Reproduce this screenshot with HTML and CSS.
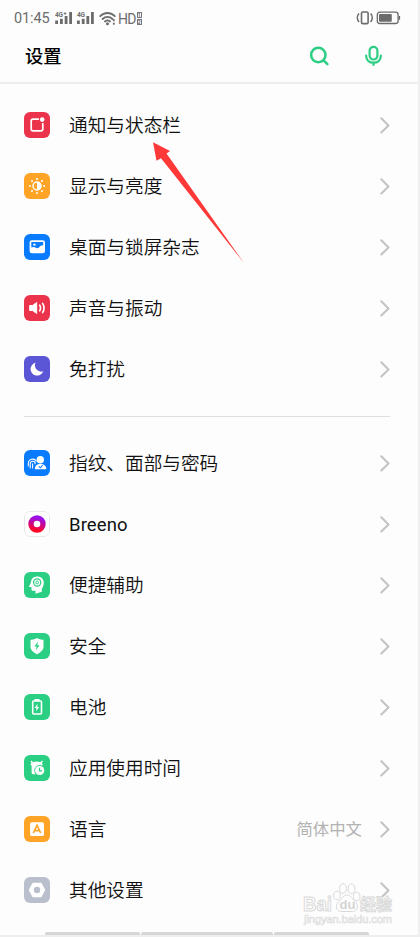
FILE: index.html
```html
<!DOCTYPE html>
<html lang="zh-CN">
<head>
<meta charset="utf-8">
<title>设置</title>
<link rel="stylesheet" href="styles.css">
</head>
<body>
<svg width="0" height="0" class="defs">
  <defs>
    <linearGradient id="ring" x1="0.6" y1="0" x2="0.4" y2="1"><stop offset="0" stop-color="#9a10e8"/><stop offset="0.5" stop-color="#c8088f"/><stop offset="1" stop-color="#ff0828"/></linearGradient>
    <symbol id="chev" viewBox="0 0 12 18"><path d="M2.300 2.300l7.200 7.100-7.200 7.100" fill="none" stroke="#c4c4c4" stroke-width="2.100" stroke-linecap="round" stroke-linejoin="round"/></symbol>
  </defs>
</svg>
<div class="screen">
  <div class="status">
    <span class="time">01:45</span>
    <svg class="signals" width="40" height="16" viewBox="0 0 40 16" fill="#6c6c6c">
      <text x="0" y="6" class="net">4G</text><text x="22" y="6" class="net">4G</text>
      <path d="M8.800 2.500h2.600M10.100 1.200v2.600" stroke="#6c6c6c" stroke-width=".9"/>
      <rect x="0.200" y="9.500" width="2.800" height="3.500"/><rect x="5" y="7.800" width="2.800" height="5.200"/><rect x="9.700" y="5" width="2.800" height="8"/><rect x="14.200" y="1" width="2.800" height="12"/>
      <rect x="22" y="9.500" width="2.800" height="3.500"/><rect x="26.800" y="7.800" width="2.800" height="5.200"/><rect x="31.400" y="5" width="2.800" height="8"/><rect x="36" y="1" width="2.800" height="12"/>
    </svg>
    <svg class="wifi" width="18" height="15" viewBox="0 0 18 15" fill="none" stroke="#6c6c6c" stroke-width="1.800" stroke-linecap="round">
      <path d="M1.200 5.200c4-4.300 10.600-4.300 14.600 0M3.600 8c2.800-2.800 7-2.800 9.800 0M6 10.500c1.500-1.400 3.500-1.400 5 0"/><circle cx="8.500" cy="12.700" r=".6" fill="#6c6c6c"/>
      <path d="M14.800 9v.4M14.800 12.500v.4" stroke-width="1.900"/>
    </svg>
    <span class="hd">HD</span>
    <span class="sims"><i>1</i><i>2</i></span>
    <svg class="power" width="46" height="16" viewBox="0 0 46 16" fill="none" stroke="#6c6c6c" stroke-width="1.300">
      <rect x="5.500" y="2" width="6.600" height="11.600" rx="1.200" stroke-width="1.600"/>
      <path d="M3 3.500c-2.200 2.500-2.200 6 0 8.500M14.600 3.500c2.200 2.500 2.200 6 0 8.500" stroke-width="1.600"/>
      <rect x="21.300" y="2.200" width="20.800" height="11.300" rx="2.500"/>
      <rect x="23" y="4" width="12.800" height="7.800" rx="1" fill="#6c6c6c" stroke="none"/>
      <path d="M43.300 6v3.700" stroke-width="1.600"/>
    </svg>
  </div>
  <header class="header">
    <h1>设置</h1>
    <svg class="search" width="22" height="22" viewBox="0 0 22 22" fill="none" stroke="#2cce84" stroke-width="2.500" stroke-linecap="round"><circle cx="10.300" cy="10" r="7.200"/><path d="M15.600 15.300l3.800 3.800"/></svg>
    <svg class="mic" width="20" height="22" viewBox="0 0 20 22" fill="none" stroke="#2cce84" stroke-width="2.200" stroke-linecap="round"><rect x="6.600" y="1.800" width="7.800" height="12.700" rx="3.900"/><path d="M3.100 10.500c0 4.600 3.200 7.200 7.400 7.200s7.400-2.600 7.400-7.200M10.500 18v2"/></svg>
  </header>

  <main>
    <section class="group">
      <div class="row"><svg class="icon red" viewBox="0 0 26 26"><path d="M15 7.200H9a1.800 1.800 0 0 0-1.800 1.800v8A1.800 1.800 0 0 0 9 18.800h8a1.800 1.800 0 0 0 1.800-1.800v-6" fill="none" stroke="#fff" stroke-width="1.700"/><circle cx="18.200" cy="7.600" r="2.300" fill="#fff"/></svg><span class="label">通知与状态栏</span><svg class="chev"><use href="#chev"/></svg></div>
      <div class="row"><svg class="icon orange" viewBox="0 0 26 26"><circle cx="13" cy="13" r="4" fill="none" stroke="#fff" stroke-width="1.500"/><path d="M13 9a4 4 0 0 1 0 8z" fill="#fff"/><g fill="#fff"><circle cx="13" cy="5.900" r="1"/><circle cx="13" cy="20.100" r="1"/><circle cx="5.900" cy="13" r="1"/><circle cx="20.100" cy="13" r="1"/><circle cx="8" cy="8" r="1"/><circle cx="18" cy="8" r="1"/><circle cx="8" cy="18" r="1"/><circle cx="18" cy="18" r="1"/></g></svg><span class="label">显示与亮度</span><svg class="chev"><use href="#chev"/></svg></div>
      <div class="row"><svg class="icon blue" viewBox="0 0 26 26"><rect x="5.600" y="6.300" width="15.400" height="13" rx="2.300" fill="#fff"/><path d="M7.300 8h11.900v3.200c-3 .2-3.200 1.300-4.200 2.300s-2.400.8-3.600 0-2.600-.8-4.100 0z" fill="#087bff"/><circle cx="10.400" cy="10.600" r="1.200" fill="#fff"/></svg><span class="label">桌面与锁屏杂志</span><svg class="chev"><use href="#chev"/></svg></div>
      <div class="row"><svg class="icon red" viewBox="0 0 26 26"><path d="M5.700 10.500h2.800l4.200-3v11l-4.200-3H5.700z" fill="#fff" stroke="#fff" stroke-linejoin="round"/><path d="M15.700 10.200q1.700 2.800 0 5.600M18.600 8.300q2.800 4.700 0 9.400" fill="none" stroke="#fff" stroke-width="1.600" stroke-linecap="round"/></svg><span class="label">声音与振动</span><svg class="chev"><use href="#chev"/></svg></div>
      <div class="row"><svg class="icon violet" viewBox="0 0 26 26"><path d="M11.500 6.800a6.500 6.500 0 1 0 7.700 8.500A6.300 6.300 0 0 1 11.500 6.800z" fill="#fff"/></svg><span class="label">免打扰</span><svg class="chev"><use href="#chev"/></svg></div>
    </section>
    <hr class="divider">
    <section class="group">
      <div class="row"><svg class="icon blue" viewBox="0 0 26 26"><circle cx="16.300" cy="9.700" r="3.700" fill="#fff"/><path d="M10.800 19.300c0-3.800 2.200-5.400 5.500-5.400 4 0 6 2 6 5.400z" fill="#fff"/><path d="M14.800 16.400l1.500 1.400 2.400-2.600" fill="none" stroke="#087bff" stroke-width="1.100"/><path d="M4.300 16v-2.500a4.300 4.300 0 0 1 8-2.200M6.200 18v-4.200a2.500 2.500 0 0 1 5 0M8.600 13.800V18" fill="none" stroke="#fff" stroke-width="1.050" stroke-linecap="round"/></svg><span class="label">指纹、面部与密码</span><svg class="chev"><use href="#chev"/></svg></div>
      <div class="row"><svg class="icon white" viewBox="0 0 26 26"><rect x=".5" y=".5" width="25" height="25" rx="5.500" fill="#fff" stroke="#e9e9e9"/><circle cx="13" cy="13" r="6" fill="none" stroke="url(#ring)" stroke-width="5.400"/></svg><span class="label latin">Breeno</span><svg class="chev"><use href="#chev"/></svg></div>
      <div class="row"><svg class="icon green" viewBox="0 0 26 26"><path d="M13 4.600c4.300 0 6.800 2.600 6.800 6.200 0 3.200-1.300 4.500-2 6v2.900l-6.300 2v-2.900H9c-1.200 0-1.500-.6-1.500-1.600v-1.900l-2.700-.5 2-3.800c.3-3.600 2.300-6.400 6.200-6.400z" fill="#fff"/><circle cx="13.200" cy="10.500" r="3.600" fill="none" stroke="#2bcf83" stroke-width="1.200"/><circle cx="13.200" cy="10.500" r="1.400" fill="none" stroke="#2bcf83"/></svg><span class="label">便捷辅助</span><svg class="chev"><use href="#chev"/></svg></div>
      <div class="row"><svg class="icon green" viewBox="0 0 26 26"><path d="M13 4.900c2 1.200 4 1.700 6.500 1.800v6.800c0 3.500-2.700 5.800-6.500 7.700-3.800-1.900-6.500-4.200-6.500-7.700V6.700c2.500-.1 4.500-.6 6.500-1.800z" fill="#fff"/><path d="M13.900 8.600l-3.500 5h2.200l-.6 3.700 3.500-5h-2.200z" fill="#2bcf83"/></svg><span class="label">安全</span><svg class="chev"><use href="#chev"/></svg></div>
      <div class="row"><svg class="icon green" viewBox="0 0 26 26"><rect x="8.700" y="7" width="8.800" height="13" rx="1" fill="none" stroke="#fff" stroke-width="1.600"/><path d="M10.500 5h5v2h-5z" fill="#fff"/><path d="M13.600 9.800l-3.100 4.200h1.900l-.4 3.200 3.200-4.200h-1.900z" fill="#fff"/></svg><span class="label">电池</span><svg class="chev"><use href="#chev"/></svg></div>
      <div class="row"><svg class="icon green" viewBox="0 0 26 26"><path d="M7.300 5.400l1.700 1.800q3.700-1.300 7.400 0l1.700-1.800.8.800-1 1.800q.8 1 .8 2.200L13 13l-1.200 6.200H9q-1.400 0-1.400-1.400v-7.100L6.400 9.400l1-1.500-.9-1.700z" fill="#fff"/><circle cx="15.700" cy="15.500" r="5.400" fill="#2bcf83"/><circle cx="15.700" cy="15.500" r="4.600" fill="#fff"/><path d="M15.500 12.700v3.100h2.500" fill="none" stroke="#2bcf83" stroke-width="1.200"/></svg><span class="label">应用使用时间</span><svg class="chev"><use href="#chev"/></svg></div>
      <div class="row"><svg class="icon orange" viewBox="0 0 26 26"><rect x="6.100" y="6.300" width="13.900" height="13.700" rx="1.600" fill="#fff"/><path d="M9.400 17L13 9.200l3.700 7.800M10.900 14.700h4.300" fill="none" stroke="#ffa427" stroke-width="1.700"/></svg><span class="label">语言</span><span class="value">简体中文</span><svg class="chev"><use href="#chev"/></svg></div>
      <div class="row"><svg class="icon gray" viewBox="0 0 26 26"><path d="M9 6.500h8l3.500 6.500-3.500 6.500H9L5.500 13z" fill="#fff" stroke="#fff" stroke-width="1.500" stroke-linejoin="round"/><circle cx="13" cy="13" r="3.200" fill="#babfcd"/></svg><span class="label">其他设置</span><svg class="chev"><use href="#chev"/></svg></div>
    </section>
  </main>

  <svg class="arrow" width="92" height="122" viewBox="0 0 92 122"><path d="M1 .3l17 8.700-3.500 2.500L92 121 9 16.200l-4.500 2.500z" fill="#ff3838"/></svg>

  <svg class="watermark" width="100" height="46" viewBox="0 0 100 46">
    <g fill="#fdfdfd" stroke="#d9d9d9" stroke-width="1">
      <ellipse cx="36" cy="13.500" rx="3.300" ry="4.300"/><ellipse cx="42" cy="6.500" rx="3.400" ry="5"/><ellipse cx="50.500" cy="6.800" rx="3.400" ry="5"/><ellipse cx="55.700" cy="14.500" rx="3.300" ry="4.300"/>
      <path d="M46 13c4 0 5 4 8 6.500 4.500 4 2.500 10-2.500 10H40.500c-5.500 0-7-6-2.500-10 3-2.500 4-6.500 8-6.500z"/>
      <text x="2" y="28.500" class="wm" textLength="29" lengthAdjust="spacingAndGlyphs">Bai</text><text x="59" y="28" class="wm zh">经验</text>
    </g>
    <text x="38.500" y="27" class="wm du">du</text>
    <text x="3" y="41" class="wm-url" textLength="88">jingyan.baidu.com</text>
  </svg>
  <div class="scroll"><i class="a"></i><i class="b"></i><i class="c"></i></div>
</div>
</body>
</html>
```
FILE: styles.css
```css
* { box-sizing: border-box; }
body { margin: 0; background: #fdfdfd; color: #111; font-family: Roboto, "Noto Sans CJK SC", sans-serif; }
.defs { position: absolute; }
.screen { position: relative; width: 420px; height: 937px; overflow: hidden; border-right: 2px solid #efefef; border-bottom: 2px solid #eee; }
.status { height: 36px; padding: 10px 15px 0 14px; display: flex; align-items: flex-start; color: #6c6c6c; }
.time { width: 41px; font-size: 14.5px; line-height: 18px; letter-spacing: -.1px; white-space: nowrap; }
.signals { margin-top: 1px; }
.net { font: bold 6.500px Roboto, sans-serif; letter-spacing: -.3px; }
.wifi { margin: 1px 0 0 4px; }
.hd { margin-left: 1px; font-size: 14px; line-height: 18px; letter-spacing: -.7px; }
.sims { display: flex; flex-direction: column; gap: 1px; margin: 2px 0 0 1px; }
.sims i { width: 5px; height: 6px; border: 1px solid #777; font: bold 5px/4px Roboto, sans-serif; text-align: center; }
.power { margin-left: auto; margin-right: 1px; }
.header { height: 48px; padding: 0 35px 0 25px; display: flex; border-bottom: 2px solid #eee; }
.header h1 { margin: 7px auto 0 0; font-size: 18.300px; line-height: 28px; font-weight: 500; color: #000; }
.search { margin: 9px 33px 0 0; }
.mic { margin-top: 9px; }
main { padding: 11px 27px 0 24px; }
.row { height: 61px; display: flex; align-items: center; }
.icon { width: 26px; height: 26px; margin: -1px 19px 0 0; border-radius: 6px; flex: none; }
.red { background: #eb344c; }
.orange { background: #ffa427; }
.blue { background: #087bff; }
.violet { background: #5b56d6; }
.green { background: #2bcf83; }
.gray { background: #babfcd; }
.label { flex: 1; font-size: 18.670px; line-height: 28px; font-weight: 350; white-space: nowrap; }
.latin { font-weight: 400; font-size: 18.500px; letter-spacing: .1px; }
.value { margin: -3px 17px 0 0; font-size: 16.400px; color: #b2b2b2; }
.chev { width: 12px; height: 18px; margin-top: -1px; flex: none; }
.divider { height: 1px; margin: 16px 1px 16px 0; border: 0; background: #dfdfdf; }
.arrow { position: absolute; left: 152px; top: 142px; }
.watermark { position: absolute; left: 301px; top: 882px; }
.wm { font: bold 20px "Liberation Sans", sans-serif; }
.wm.du { font-size: 13px; fill: #d4d4d4; }
.wm.zh { font: bold 16px "Noto Sans CJK SC", sans-serif; }
.wm-url { font: 11px "Liberation Sans", sans-serif; fill: #fff; stroke: #dedede; stroke-width: .7px; }
.scroll { position: absolute; left: 45px; bottom: 0; display: flex; gap: 1px; }
.scroll i { height: 3px; background: #d6d6d6; border-radius: 2px 2px 0 0; }
.scroll .a { width: 95px; }
.scroll .b { width: 132px; }
.scroll .c { width: 95px; }
```
